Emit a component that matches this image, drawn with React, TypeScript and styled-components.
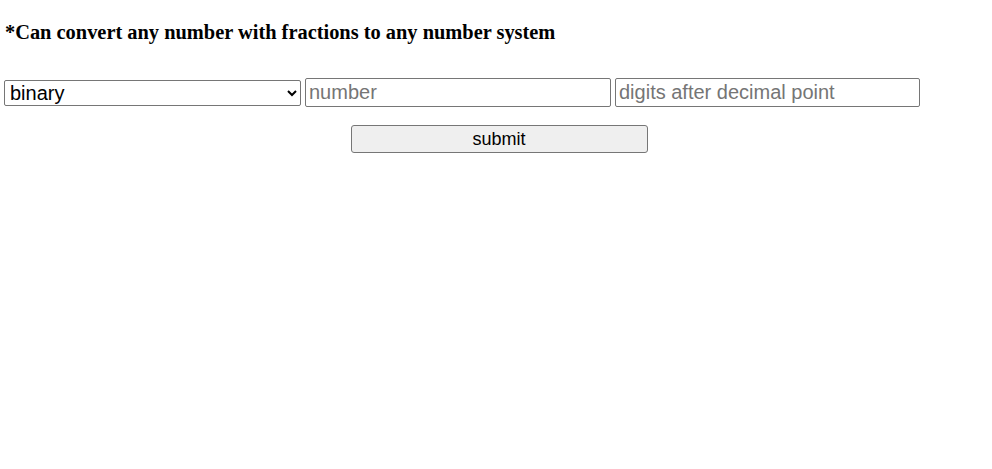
import React from "react";
import styled, { createGlobalStyle } from "styled-components";

const Global = createGlobalStyle`
  html, body { margin: 0; padding: 0; background: #fff; }
  body { font-family: "Liberation Serif", "Times New Roman", serif; }
`;

const Page = styled.div`
  padding: 0 4px;
`;

const Heading = styled.h3`
  font-family: "Liberation Serif", "Times New Roman", serif;
  font-weight: bold;
  font-size: 20.4px;
  color: #000;
  margin: 0;
  padding: 20px 0 0 1px;
  line-height: 24px;
`;

const Form = styled.form`
  display: flex;
  flex-direction: column;
  margin-top: 34px;
`;

const Row = styled.div`
  display: flex;
  align-items: center;
  gap: 4px;
`;

const Select = styled.select`
  width: 297px;
  height: 26px;
  font-family: "Liberation Sans", Arial, sans-serif;
  font-size: 20px;
  color: #000;
  border: 1px solid #767676;
  border-radius: 2px;
  background: #fff;
  padding: 0 0 0 1px;
  box-sizing: border-box;
`;

const Input = styled.input<{ $w: number }>`
  width: ${(p) => p.$w}px;
  height: 29px;
  box-sizing: border-box;
  font-family: "Liberation Sans", Arial, sans-serif;
  font-size: 20px;
  border: 1px solid #767676;
  border-radius: 2px;
  padding: 1px 3px;
  color: #000;
  &::placeholder { color: #757575; }
`;

const ButtonRow = styled.div`
  display: flex;
  justify-content: center;
  margin-top: 18px;
  padding-left: 6px;
`;

const Button = styled.button`
  width: 297px;
  height: 28px;
  box-sizing: border-box;
  font-family: "Liberation Sans", Arial, sans-serif;
  font-size: 18px;
  color: #000;
  background: #efefef;
  border: 1px solid #767676;
  border-radius: 3px;
  padding: 0;
`;

export default function App() {
  return (
    <>
      <Global />
      <Page>
        <Heading>*Can convert any number with fractions to any number system</Heading>
        <Form onSubmit={(e) => e.preventDefault()}>
          <Row>
            <Select defaultValue="binary">
              <option value="binary">binary</option>
              <option value="octal">octal</option>
              <option value="decimal">decimal</option>
              <option value="hexadecimal">hexadecimal</option>
            </Select>
            <Input $w={306} placeholder="number" />
            <Input $w={305} placeholder="digits after decimal point" />
          </Row>
          <ButtonRow>
            <Button type="submit">submit</Button>
          </ButtonRow>
        </Form>
      </Page>
    </>
  );
}
